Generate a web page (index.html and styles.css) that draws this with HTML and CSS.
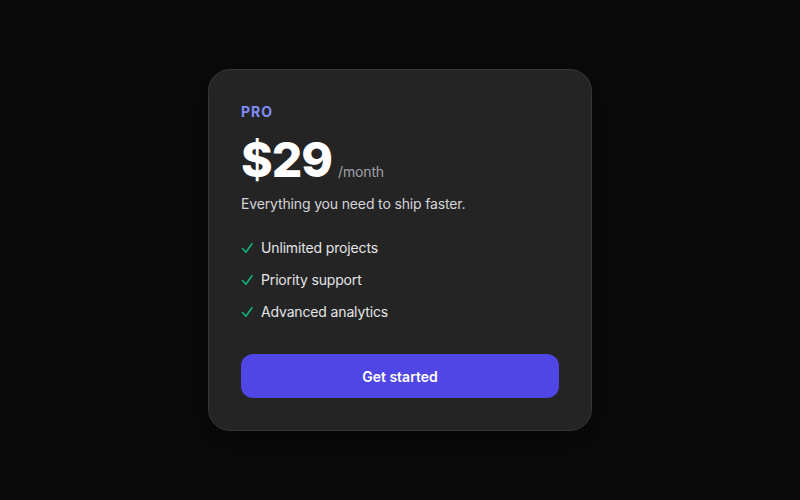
FILE: index.html
```html
<!DOCTYPE html>
<html lang="en">
<head>
    <meta charset="UTF-8">
    <meta name="viewport" content="width=device-width, initial-scale=1.0">
    <title>Pricing</title>
<link rel="stylesheet" href="styles.css">
</head>
<body>
    <div class="plan-card">
        <div class="plan-name">PRO</div>
        <div class="plan-price">
            <span class="amount">$29</span>
            <span class="period">/month</span>
        </div>
        <p class="plan-desc">Everything you need to ship faster.</p>
        <ul class="features">
            <li>
                <svg class="check" viewBox="0 0 12 12" width="12" height="12"><path d="M1.5 6.5L4.8 10.2L11 1.8"/></svg>
                Unlimited projects
            </li>
            <li>
                <svg class="check" viewBox="0 0 12 12" width="12" height="12"><path d="M1.5 6.5L4.8 10.2L11 1.8"/></svg>
                Priority support
            </li>
            <li>
                <svg class="check" viewBox="0 0 12 12" width="12" height="12"><path d="M1.5 6.5L4.8 10.2L11 1.8"/></svg>
                Advanced analytics
            </li>
        </ul>
        <button class="btn">Get started</button>
    </div>
</body>
</html>
```

FILE: styles.css
```css
body {
    font-family: Inter, "Liberation Sans", sans-serif;
    display: flex;
    justify-content: center;
    align-items: center;
    height: 100vh;
    margin: 0;
    background-color: #0a0a0a;
}
.plan-card {
    width: 318px;
    padding: 32px;
    background-color: #242424;
    border: 1px solid #363636;
    border-radius: 22px;
    box-shadow: 0 10px 30px rgba(0, 0, 0, 0.4);
    display: flex;
    flex-direction: column;
}
.plan-name {
    color: #818cf8;
    font-size: 14px;
    font-weight: 700;
    letter-spacing: 1px;
    line-height: 20px;
}
.plan-price {
    display: flex;
    align-items: baseline;
    gap: 6px;
    margin-top: 14px;
}
.amount {
    color: #ffffff;
    font-size: 48px;
    font-weight: 800;
    line-height: 48px;
    letter-spacing: -1px;
}
.period {
    color: #a1a1aa;
    font-size: 14px;
    letter-spacing: -0.15px;
}
.plan-desc {
    color: #d4d4d8;
    font-size: 14px;
    line-height: 20px;
    letter-spacing: -0.15px;
    margin: 10px 0 0 0;
}
.features {
    list-style: none;
    padding: 0;
    margin: 24px 0 0 0;
    display: flex;
    flex-direction: column;
    gap: 12px;
}
.features li {
    display: flex;
    align-items: center;
    gap: 8px;
    color: #e4e4e7;
    font-size: 14px;
    line-height: 20px;
    letter-spacing: -0.15px;
}
.check {
    fill: none;
    stroke: #10b981;
    stroke-width: 1.5;
    stroke-linecap: round;
    stroke-linejoin: round;
}
.btn {
    margin-top: 32px;
    height: 44px;
    background-color: #4f46e5;
    color: #ffffff;
    border: none;
    border-radius: 12px;
    font-family: inherit;
    font-size: 14px;
    font-weight: 600;
    cursor: pointer;
}
```
